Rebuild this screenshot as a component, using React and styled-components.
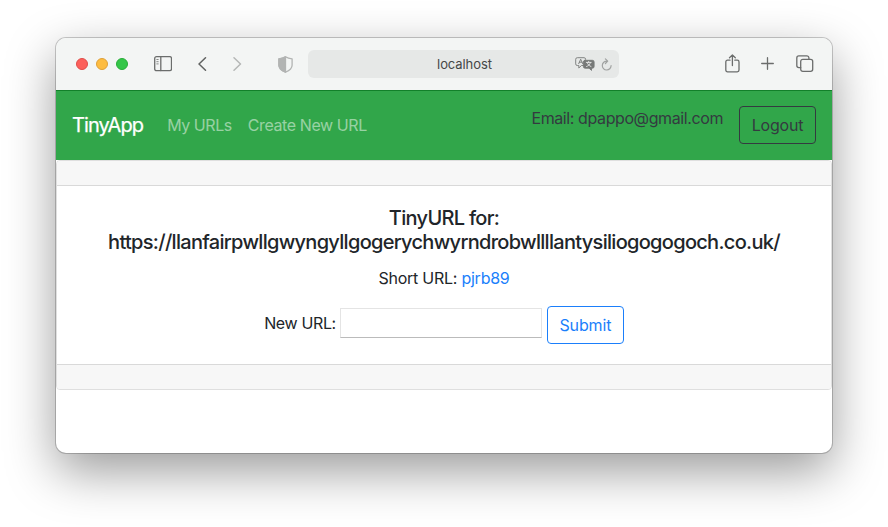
import React from "react";
import styled, { createGlobalStyle } from "styled-components";

const GlobalStyle = createGlobalStyle`
  *, *::before, *::after { box-sizing: border-box; }
  body {
    margin: 0;
    background: #fff;
    color: #212529;
    font: 400 16px/24px Inter, "Liberation Sans", sans-serif;
    overflow: hidden;
  }
`;

const Desktop = styled.div`
  height: 527px;
  padding: 38px 56px 74px;
  overflow: hidden;
`;

const BrowserWindow = styled.div`
  height: 415px;
  display: flex;
  flex-direction: column;
  border-radius: 10px;
  background: #fff;
  box-shadow: 0 0 0 1px rgba(0, 0, 0, 0.2), 0 18px 50px rgba(0, 0, 0, 0.4);
`;

const Toolbar = styled.div`
  flex: none;
  height: 52px;
  display: flex;
  align-items: center;
  padding: 0 18px 0 20px;
  border-radius: 10px 10px 0 0;
  background: #f3f5f4;
`;

const Lights = styled.div`
  display: flex;
  gap: 8px;
  margin-right: 26px;
`;

const Light = styled.span`
  width: 12px;
  height: 12px;
  border-radius: 50%;
  background: ${(p) => p.$fill};
  border: 1px solid ${(p) => p.$edge};
`;

const Icon = styled.svg`
  flex: none;
  display: block;
  fill: none;
  stroke: ${(p) => p.$tone || "#6b6d6c"};
  stroke-width: ${(p) => p.$weight || 1.3};
  stroke-linecap: round;
  stroke-linejoin: round;
  margin-right: ${(p) => p.$gap || 0}px;
`;

const AddressBar = styled.div`
  flex: none;
  width: 311px;
  height: 28px;
  border-radius: 6px;
  background: #e6e8e7;
  display: grid;
  grid-template-columns: 1fr auto 1fr;
  align-items: center;
  color: #454746;
  font-size: 13px;
  line-height: 28px;
`;

const Host = styled.span`
  grid-column: 2;
  letter-spacing: -0.08px;
  padding-left: 2px;
`;

const AddressActions = styled.div`
  display: flex;
  align-items: center;
  justify-content: flex-end;
  padding-right: 7px;
`;

const WindowActions = styled.div`
  display: flex;
  align-items: center;
  height: 51px;
  margin: 0 0 1px auto;
`;

const Navbar = styled.nav`
  flex: none;
  height: 70px;
  display: flex;
  align-items: center;
  padding: 0 16px 1px;
  background: #31a64a;
  border-top: 1px solid #12802a;
`;

const Brand = styled.span`
  color: #fff;
  font-size: 20px;
  line-height: 30px;
  letter-spacing: ${(p) => p.$track || 0}px;
  -webkit-text-stroke: 0.25px #fff;
  margin-right: 24px;
`;

const NavLink = styled.a`
  color: rgba(255, 255, 255, 0.5);
  letter-spacing: ${(p) => p.$track || 0}px;
  margin-right: 16px;
`;

const Account = styled.div`
  display: flex;
  align-items: flex-start;
  gap: 16px;
  margin-left: auto;
  color: #343a40;
`;

const Email = styled.span`
  letter-spacing: -0.4px;
`;

const Button = styled.button`
  width: 77px;
  height: 38px;
  padding: 0;
  border: 1px solid ${(p) => p.$color};
  border-radius: 4px;
  background: transparent;
  color: ${(p) => p.$color};
  font: inherit;
  letter-spacing: ${(p) => p.$track || 0}px;
`;

const Card = styled.main`
  flex: none;
  height: 230px;
  display: flex;
  flex-direction: column;
  border: 1px solid #dfdfdf;
  border-radius: 4px;
  overflow: hidden;
  text-align: center;
`;

const CardHeader = styled.header`
  height: 25px;
  background: #f7f7f7;
  border-bottom: 1px solid #d9d9d9;
`;

const CardBody = styled.section`
  flex: 1;
  padding-top: 20px;
`;

const CardFooter = styled.footer`
  height: 25px;
  background: #f7f7f7;
  border-top: 1px solid #d9d9d9;
`;

const Title = styled.h5`
  margin: 0 0 12px;
  font-size: 20px;
  line-height: 24px;
  font-weight: 500;
`;

const TitleLine = styled.span`
  display: block;
  white-space: nowrap;
  letter-spacing: ${(p) => p.$track}px;
`;

const ShortUrl = styled.p`
  margin: 0 0 16px;
  letter-spacing: -0.25px;
`;

const Link = styled.a`
  color: #1b7ffb;
`;

const Form = styled.form`
  display: flex;
  align-items: center;
  justify-content: center;
`;

const Label = styled.label`
  letter-spacing: -0.35px;
  margin: 0 4px 4px 0;
`;

const Input = styled.input`
  width: 202px;
  height: 30px;
  margin: 0 5px 4px 0;
  border: 1px solid #e4e4e4;
  border-bottom-color: #bbb;
  background: #fff;
  outline: none;
`;

const SidebarIcon = () => (
  <Icon width="18" height="16" viewBox="0 0 18 16" $gap={26}>
    <rect x="0.7" y="0.7" width="16.8" height="14" rx="1.8" />
    <path d="M6.8 1v13.5" />
    <path d="M2.8 3.5h1.4M2.8 5.7h1.4M2.8 7.9h1.4" strokeWidth="0.8" />
  </Icon>
);

const BackIcon = () => (
  <Icon width="9" height="14" viewBox="0 0 9 14" $weight={1.5} $tone="#606261" $gap={26}>
    <path d="M7.5 0.8 1 7l6.5 6.2" />
  </Icon>
);

const ForwardIcon = () => (
  <Icon width="9" height="14" viewBox="0 0 9 14" $weight={1.5} $tone="#b5b7b6" $gap={36}>
    <path d="m1 0.8 6.5 6.2L1 13.2" />
  </Icon>
);

const ShieldIcon = () => (
  <Icon width="15" height="17" viewBox="0 0 15 17" $tone="#b2b4b3" $gap={15}>
    <path d="M7.5 0.8C5.8 2 3.4 2.7.9 2.8v6.4c0 3.3 2.8 5.3 6.6 7 3.8-1.7 6.6-3.7 6.6-7V2.8C11.6 2.7 9.2 2 7.5.8Z" />
    <path d="M7.5 0.8C5.8 2 3.4 2.7.9 2.8v6.4c0 3.3 2.8 5.3 6.6 7Z" fill="#b2b4b3" />
  </Icon>
);

const TranslateIcon = () => (
  <Icon width="20" height="14" viewBox="0 0 20 14" $weight={0.9} $tone="#777978" $gap={6}>
    <path d="M8.2 8.5H6.5L3.8 11V8.5H2.3A1.6 1.6 0 0 1 .7 6.9V2.3A1.6 1.6 0 0 1 2.3.7h6.8a1.6 1.6 0 0 1 1.6 1.6" />
    <path d="M3.7 6.7 5.7 2.2l2 4.5M4.4 5.2H7" />
    <path
      d="M10.1 3.3h7.3a1.7 1.7 0 0 1 1.7 1.7v4.5a1.7 1.7 0 0 1-1.7 1.7h-.9v2.2l-2.4-2.2h-4a1.7 1.7 0 0 1-1.7-1.7V5a1.7 1.7 0 0 1 1.7-1.7Z"
      fill="#777978"
    />
    <path d="M11.3 5.4h4.9M13.7 4.4v1M15.4 5.6c-.6 2-1.9 3.2-3.8 3.9M12.2 5.6c.5 1.8 1.8 3.1 3.8 3.9" stroke="#e6e8e7" />
  </Icon>
);

const ReloadIcon = () => (
  <Icon width="11" height="13" viewBox="0 0 11 13" $weight={1.2} $tone="#a0a2a1">
    <path d="M6 3.2a4.4 4.4 0 1 0 4.1 4.4M4.4 0.9 6.7 3.2 4.4 5.5" />
  </Icon>
);

const ShareIcon = () => (
  <Icon width="15" height="19" viewBox="0 0 15 19" $gap={21}>
    <path d="M5 6.2H2.5A1.7 1.7 0 0 0 .8 7.9v8.2a1.7 1.7 0 0 0 1.7 1.7h9.8a1.7 1.7 0 0 0 1.7-1.7V7.9a1.7 1.7 0 0 0-1.7-1.7H9.8" />
    <path d="M7.4 11.6V1M4.5 3.7 7.4.9l2.9 2.8" />
  </Icon>
);

const PlusIcon = () => (
  <Icon width="13" height="13" viewBox="0 0 13 13" $gap={22}>
    <path d="M6.5.7v11.6M.7 6.5h11.6" />
  </Icon>
);

const TabsIcon = () => (
  <Icon width="18" height="17" viewBox="0 0 18 17">
    <path d="M4.7 12.7H2.9A2.1 2.1 0 0 1 .8 10.6V2.9A2.1 2.1 0 0 1 2.9.8h7.9a2.1 2.1 0 0 1 2.1 2.1v1.3" />
    <rect x="4.7" y="4.3" width="12" height="12" rx="2.1" />
  </Icon>
);

export default function App() {
  return (
    <Desktop>
      <GlobalStyle />
      <BrowserWindow>
        <Toolbar>
          <Lights>
            <Light $fill="#fc605b" $edge="#e04d49" />
            <Light $fill="#fdbc40" $edge="#dfa037" />
            <Light $fill="#34c648" $edge="#28ad38" />
          </Lights>
          <SidebarIcon />
          <BackIcon />
          <ForwardIcon />
          <ShieldIcon />
          <AddressBar>
            <Host>localhost</Host>
            <AddressActions>
              <TranslateIcon />
              <ReloadIcon />
            </AddressActions>
          </AddressBar>
          <WindowActions>
            <ShareIcon />
            <PlusIcon />
            <TabsIcon />
          </WindowActions>
        </Toolbar>
        <Navbar>
          <Brand $track={-0.9}>TinyApp</Brand>
          <NavLink $track={-0.45}>My URLs</NavLink>
          <NavLink $track={-0.4}>Create New URL</NavLink>
          <Account>
            <Email>Email: dpappo@gmail.com</Email>
            <Button $color="#343a40" $track={-0.2}>Logout</Button>
          </Account>
        </Navbar>
        <Card>
          <CardHeader />
          <CardBody>
            <Title>
              <TitleLine $track={-0.7}>TinyURL for:</TitleLine>
              <TitleLine $track={-0.7}>https://llanfairpwllgwyngyllgogerychwyrndrobwllllantysiliogogogoch.co.uk/</TitleLine>
            </Title>
            <ShortUrl>
              Short URL: <Link>pjrb89</Link>
            </ShortUrl>
            <Form>
              <Label htmlFor="new-url">New URL:</Label>
              <Input id="new-url" />
              <Button type="button" $color="#1b7ffb" $track={-0.15}>Submit</Button>
            </Form>
          </CardBody>
          <CardFooter />
        </Card>
      </BrowserWindow>
    </Desktop>
  );
}
